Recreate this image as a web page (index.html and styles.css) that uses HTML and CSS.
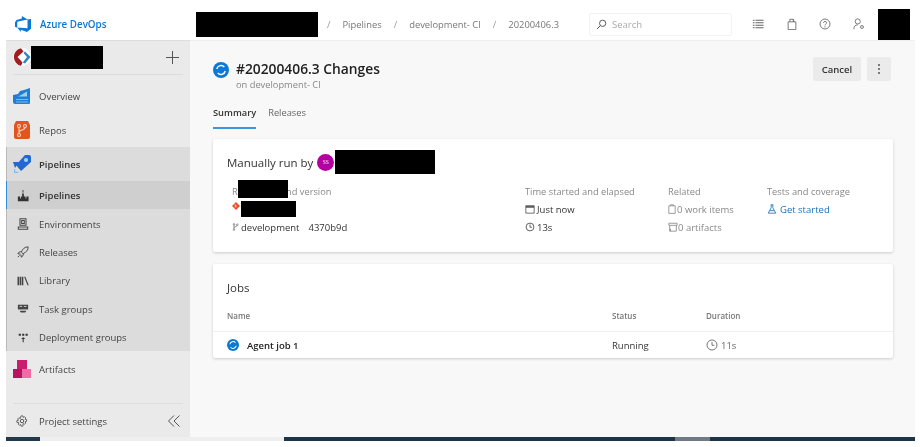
FILE: index.html
```html
<!DOCTYPE html>
<html lang="en">
<head>
<meta charset="utf-8">
<title>Azure DevOps</title>
<link rel="stylesheet" href="styles.css">
</head>
<body>
<div class="app">
  <header class="topbar">
    <div class="brand">
      <svg class="brand-icon" viewBox="0 0 18 18"><path d="M17 4v9.740l-4 3.280-6.200-2.260V17l-3.510-4.590 10.230.8V4.440zm-3.410.49L7.850 1v2.580L2.580 5.120 1 7.150v4.610l2.260 1V6.860z" fill="#0a78d4"/></svg>
      <span>Azure DevOps</span>
    </div>
    <div class="redact crumb-redact"></div>
    <nav class="crumbs">
      <span class="sep">/</span><span>Pipelines</span><span class="sep">/</span><span>development- CI</span><span class="sep">/</span><span>20200406.3</span>
    </nav>
    <div class="search">
      <svg class="ico" viewBox="0 0 14 14"><circle cx="8.500" cy="5.500" r="4" fill="none" stroke="#444" stroke-width="1.100"/><path d="M5.500 8.500 1.500 12.500" stroke="#444" stroke-width="1.200"/></svg>
      <span>Search</span>
    </div>
    <div class="top-icons">
      <svg class="ico" viewBox="0 0 14 14"><path d="M1 2.500h2M1 5.500h2M1 8.500h2M1 11.500h2M4 2.500h9.500M4 5.500h9.500M4 8.500h9.500M4 11.500h9.500" stroke="#666" stroke-width="1.200"/></svg>
      <svg class="ico" viewBox="0 0 14 14"><path d="M2.500 4.500h9v9h-9zM4.500 4.500V1.500h4l1 3M8.500 1.500v3" fill="none" stroke="#666"/></svg>
      <svg class="ico" viewBox="0 0 14 14"><circle cx="7" cy="7" r="5.800" fill="none" stroke="#666"/><path d="M5.200 5.600C5.200 3.400 8.900 3.500 8.900 5.600 8.900 7 7 7 7 8.600" fill="none" stroke="#666"/><circle cx="7" cy="10.300" r=".7" fill="#666"/></svg>
      <svg class="ico" viewBox="0 0 14 14"><circle cx="5.500" cy="4" r="3" fill="none" stroke="#666"/><path d="M1 13c0-3 1.500-5 4.500-5" fill="none" stroke="#666"/><circle cx="10.500" cy="10.500" r="1.700" fill="none" stroke="#666"/></svg>
    </div>
    <div class="redact avatar-redact"></div>
  </header>
  <div class="body">
    <aside class="sidebar">
      <div class="org">
        <svg class="org-logo" viewBox="0 0 18 18"><circle cx="9" cy="9" r="9" fill="#fff"/><path d="M8 0.200A9 9 0 0 0 8 17.800L9.500 14.500 4.500 9 10.500 3.500z" fill="#a31c22"/><path d="M12 3.500 17.500 9 12 15.500 9.800 14.500 14 9 10.500 5z" fill="#2a86c8"/></svg>
        <div class="redact org-redact"></div>
        <svg class="plus" viewBox="0 0 13 13"><path d="M6.500 0v13M0 6.500h13" stroke="#555" stroke-width="1"/></svg>
      </div>
      <div class="hub hub-overview">
        <svg class="hub-icon" viewBox="0 0 18 18"><path d="M0 8l5-1 2-3 4-1 6-2v15a1 1 0 0 1-1 1H2a2 2 0 0 1-2-2z" fill="#1f7fd4"/><path d="M5 9.500l4-2 5-3v5H5z" fill="#9ed0f2"/><path d="M3 12.500h12M3 15h12" stroke="#7dbcec" stroke-width="1"/></svg>
        <span>Overview</span>
      </div>
      <div class="hub hub-repos">
        <svg class="hub-icon" viewBox="0 0 18 18"><path d="M3 0h12l2 4v12a2 2 0 0 1-2 2H3a2 2 0 0 1-2-2V4z" fill="#e2561d"/><g fill="none" stroke="#fbd4c0" stroke-width="1.100"><circle cx="6" cy="14" r="1.500"/><circle cx="6" cy="5" r="1.500"/><circle cx="12" cy="5" r="1.500"/><path d="M6 6.500v6M12 6.500c0 3-6 2-6 5"/></g></svg>
        <span>Repos</span>
      </div>
      <div class="group">
        <div class="hub hub-pipelines">
          <svg class="hub-icon" viewBox="0 0 18 18"><path d="M18 2a2 2 0 0 0-2-2h-4L3 10l5 6 10-9z" fill="#2268d2"/><path d="M0 7h6L2 13z" fill="#2268d2"/><path d="M1 14v4h5l-1.500-1.200H2.200v-2.500z" fill="#7dbcec"/><circle cx="13" cy="5" r="2" fill="#a9d3f5"/></svg>
          <span>Pipelines</span>
        </div>
        <div class="sub active">
          <svg class="sub-icon" viewBox="0 0 14 14"><path d="M1 13V7.500h2.500V10h1V7.500H6V4h2v3.500h2V10h1V7.500h2.500V13z" fill="#333"/><path d="M7 0v3" stroke="#333"/></svg>
          <span>Pipelines</span>
        </div>
        <div class="sub">
          <svg class="sub-icon" viewBox="0 0 14 14"><path d="M3.500 1h7v7.500h-7zM5.500 3h3v3.500h-3zM1.500 13v-2.500h11V13z" fill="none" stroke="#444" stroke-width="1.200"/></svg>
          <span>Environments</span>
        </div>
        <div class="sub">
          <svg class="sub-icon" viewBox="0 0 14 14"><path d="M13 1c-4 0-6 2-8 6l2 2c4-2 6-4 6-8zM4.500 6.500 2 7.500 1 9l3 .5M7.500 9.500l-1 2.500-1.500 1-.5-3M3 11l-2 2" fill="none" stroke="#444" stroke-width="1.100"/></svg>
          <span>Releases</span>
        </div>
        <div class="sub">
          <svg class="sub-icon" viewBox="0 0 14 14"><path d="M1.500 2v10M4 2v10M6.500 2v10" stroke="#444" stroke-width="1.800"/><path d="M9 2l4 10" stroke="#444" stroke-width="1.300"/></svg>
          <span>Library</span>
        </div>
        <div class="sub">
          <svg class="sub-icon" viewBox="0 0 14 14"><path d="M1 2h12v5.500H1z" fill="#444"/><path d="M3 4h3M8 4h3" stroke="#ddd"/><path d="M3 9h8l-1.500 2h-5z" fill="#444"/></svg>
          <span>Task groups</span>
        </div>
        <div class="sub">
          <svg class="sub-icon" viewBox="0 0 14 14"><path d="M2 2h2.500v2.500H2zM6 2h2.500v2.500H6zM10 2h2.500v2.500H10z" fill="#333"/><path d="M7.200 6v6M5.500 7.500h3.500" stroke="#333" stroke-width="1.200"/></svg>
          <span>Deployment groups</span>
        </div>
      </div>
      <div class="hub hub-artifacts">
        <svg class="hub-icon" viewBox="0 0 18 18"><path d="M4 0h10v9H4z" fill="#c91d6e"/><path d="M0 9h9v9H0z" fill="#b5135f"/><path d="M9 9h9v9H9z" fill="#f06aa6"/></svg>
        <span>Artifacts</span>
      </div>
      <div class="side-foot">
        <svg class="sub-icon" viewBox="0 0 14 14"><circle cx="7" cy="7" r="2" fill="none" stroke="#444"/><path d="M6 1h2l.4 1.800 1.600-.8 1.400 1.400-.8 1.600 1.800.4v2l-1.800.4.800 1.600-1.400 1.400-1.600-.8L8 13H6l-.4-1.800-1.600.8-1.400-1.400.8-1.600L1 8.600v-2l1.800-.4L2 4.600l1.400-1.400 1.600.8z" fill="none" stroke="#444" stroke-width=".9"/></svg>
        <span>Project settings</span>
        <svg class="collapse" viewBox="0 0 12 12"><path d="M6 .5.500 6 6 11.500M11.500.500 6 6l5.500 5.500" fill="none" stroke="#555"/></svg>
      </div>
    </aside>
    <main class="main">
      <div class="page-head">
        <svg class="run-icon big" viewBox="0 0 16 16"><use href="#running"/></svg>
        <div class="titles">
          <h1>#20200406.3 Changes</h1>
          <p>on development- CI</p>
        </div>
        <div class="actions">
          <button class="btn">Cancel</button>
          <button class="btn more" aria-label="More"><i></i><i></i><i></i></button>
        </div>
      </div>
      <div class="tabs">
        <span class="tab current">Summary</span>
        <span class="tab">Releases</span>
      </div>
      <section class="card summary">
        <div class="run-by">
          <span>Manually run by</span>
          <span class="avatar">SS</span>
          <div class="redact runner-redact"></div>
        </div>
        <div class="meta">
          <div class="col col-repo">
            <div class="label">Repository and version</div>
            <div class="redact repo-redact"></div>
            <div class="redact version-redact"></div>
            <svg class="git" viewBox="0 0 10 10"><path d="M5 0 10 5 5 10 0 5z" fill="#e8502a"/><path d="M4 3v4M4 4l2 1.500" stroke="#fff" stroke-width=".8"/></svg>
            <div class="line branch">
              <svg class="ico-s" viewBox="0 0 12 12"><path d="M3 2v8M3 7c0-2 5-1 5-4" fill="none" stroke="#555"/><circle cx="3" cy="2" r="1.200" fill="#fff" stroke="#555" stroke-width=".8"/><circle cx="8" cy="2.500" r="1.200" fill="#fff" stroke="#555" stroke-width=".8"/><circle cx="3" cy="10" r="1.200" fill="#fff" stroke="#555" stroke-width=".8"/></svg>
              <span>development</span><span class="hash">4370b9d</span>
            </div>
          </div>
          <div class="col col-time">
            <div class="label">Time started and elapsed</div>
            <div class="line"><svg class="ico-s" viewBox="0 0 12 12"><path d="M1 2h10v9H1z" fill="none" stroke="#555"/><path d="M1 3.500h10" stroke="#555" stroke-width="2"/></svg><span>Just now</span></div>
            <div class="line"><svg class="ico-s" viewBox="0 0 12 12"><circle cx="6" cy="6" r="4.700" fill="none" stroke="#444"/><path d="M6 3v3.300h2.300" fill="none" stroke="#444"/></svg><span>13s</span></div>
          </div>
          <div class="col col-related">
            <div class="label">Related</div>
            <div class="line muted"><svg class="ico-xs" viewBox="0 0 10 12"><path d="M1 2h8v9.500H1zM3 2V.8h4V2" fill="none" stroke="#888"/></svg><span>0 work items</span></div>
            <div class="line muted"><svg class="ico-xs wide" viewBox="0 0 12 12"><path d="M1 1.500h10v2.500H1zM2 4v7h8V4M3 11V8" fill="none" stroke="#888"/></svg><span>0 artifacts</span></div>
          </div>
          <div class="col col-tests">
            <div class="label">Tests and coverage</div>
            <div class="line link"><svg class="ico-s" viewBox="0 0 12 12"><path d="M4.500 1h3M5 1v3.500L1.500 11h9L7 4.500V1M3.500 8h5" fill="none" stroke="#1e6fb5"/></svg><span>Get started</span></div>
          </div>
        </div>
      </section>
      <section class="card jobs">
        <h2>Jobs</h2>
        <div class="row head">
          <span class="c-name">Name</span><span class="c-status">Status</span><span class="c-dur">Duration</span>
        </div>
        <div class="row job">
          <span class="c-name agent"><svg class="run-icon" viewBox="0 0 16 16"><use href="#running"/></svg><b>Agent job 1</b></span>
          <span class="c-status">Running</span>
          <span class="c-dur dur"><svg class="ico-clock" viewBox="0 0 12 12"><circle cx="6" cy="6" r="5" fill="none" stroke="#666" stroke-width=".9"/><path d="M6 3v3.300h2.300" fill="none" stroke="#666" stroke-width=".9"/></svg>11s</span>
        </div>
      </section>
    </main>
  </div>
  <div class="strip"><div class="s-a"></div><div class="s-b"></div><div class="s-c"></div><div class="s-d"></div><div class="s-c grow"></div></div>
</div>
<svg class="defs" width="0" height="0"><defs><g id="running"><circle cx="8" cy="8" r="8" fill="#0a78d4"/><path d="M3.800 7a4.300 4.300 0 0 1 7.500-2M12.200 9a4.300 4.300 0 0 1-7.500 2" fill="none" stroke="#fff" stroke-width="1.400"/></g></defs></svg>
</body>
</html>
```
FILE: styles.css
```css
* { box-sizing: border-box; }
html, body { margin: 0; padding: 0; background: #fff; }
body { width: 920px; height: 447px; overflow: hidden; font-family: "Open Sans", "Noto Sans", sans-serif; font-size: 10px; color: #333; }
.app { display: flex; flex-direction: column; width: 920px; height: 447px; filter: blur(.35px); }
.defs { position: absolute; }
.redact { background: #000; flex: none; }
.topbar { display: flex; align-items: center; height: 40px; padding-top: 8px; flex: none; }
.brand { display: flex; align-items: center; width: 196px; padding-left: 14px; color: #0a78d4; font-weight: 600; font-size: 9.800px; gap: 8px; }
.brand-icon { width: 18px; height: 18px; }
.crumb-redact { width: 122px; height: 25px; }
.crumbs { display: flex; gap: 12px; width: 271px; padding-left: 9px; color: #777; font-size: 9.400px; }
.crumbs .sep { color: #999; }
.search { display: flex; align-items: center; gap: 5px; width: 143px; height: 23px; padding-left: 6px; border: 1px solid #f2f2f2; border-radius: 2px; color: #aaa; font-size: 9.500px; }
.ico { width: 11px; height: 11px; flex: none; }
.top-icons { display: flex; gap: 21.500px; margin-left: 20px; }
.top-icons .ico { width: 12px; height: 12px; }
.avatar-redact { width: 32px; height: 31px; align-self: flex-start; margin: 1px 0 0 13px; }
.body { display: flex; flex: none; height: 397px; padding-left: 6px; }
.sidebar { display: flex; flex-direction: column; width: 184px; background: #eaeaea; box-shadow: inset 0 1px 0 #ddd; }
.org { display: flex; align-items: center; height: 35px; margin: 0 7px; border-bottom: 1px solid #dcdcdc; flex: none; }
.org-logo { width: 18px; height: 18px; flex: none; }
.org-redact { width: 72px; height: 23px; }
.plus { width: 13px; height: 13px; margin-left: auto; margin-right: 4px; }
.hub { display: flex; align-items: center; gap: 8px; padding-left: 7px; height: 34px; flex: none; font-size: 9.500px; color: #444; }
.hub-icon { width: 18px; height: 18px; flex: none; }
.hub-overview { margin-top: 4px; }
.group { background: #dcdcdc; border-left: 1px solid #b8b8b8; flex: none; }
.hub-pipelines { padding-left: 6px; font-weight: 600; color: #333; }
.sub { display: flex; align-items: center; gap: 10px; height: 28.400px; padding: 1px 0 0 10px; color: #444; font-size: 9.500px; }
.sub-icon { width: 12px; height: 12px; flex: none; }
.sub.active { background: #cfcfcf; box-shadow: -1px 0 0 #2f8fdc; font-weight: 600; color: #333; }
.hub-artifacts { height: 36px; }
.side-foot { display: flex; align-items: center; gap: 11px; height: 34px; margin: auto 7px 0; padding: 1px 0 0 3px; border-top: 1px solid #dedede; font-size: 9.500px; color: #444; flex: none; }
.collapse { width: 12px; height: 12px; margin-left: auto; margin-right: 3px; }
.main { width: 725px; background: #f8f8f8; padding: 19px 23px 0; box-shadow: inset 0 1px 0 #eee; }
.page-head { display: flex; align-items: flex-start; height: 36px; }
.run-icon { width: 12px; height: 12px; flex: none; }
.run-icon.big { width: 16px; height: 16px; margin: 3px 7px 0 0; }
.titles h1 { margin: 0; font-size: 13.800px; line-height: 20px; font-weight: 600; color: #222; }
.titles p { margin: 0; font-size: 9.300px; line-height: 12px; color: #888; }
.actions { display: flex; gap: 6px; margin: -2px 1px 0 auto; }
.btn { height: 24px; border: 0; border-radius: 2px; background: #ebebeb; font: 600 9.500px "Open Sans", sans-serif; color: #333; width: 48px; padding: 0; }
.btn.more { width: 24px; display: flex; flex-direction: column; align-items: center; justify-content: center; gap: 2px; }
.btn.more i { width: 2px; height: 2px; background: #555; border-radius: 50%; }
.tabs { display: flex; gap: 12px; height: 29px; margin-top: 5px; }
.tab { display: flex; align-items: center; height: 29px; padding-bottom: 3px; font-size: 9.300px; color: #666; border-bottom: 2px solid transparent; }
.tab.current { color: #333; font-weight: 600; border-bottom-color: #3a96dd; }
.card { background: #fff; border-radius: 2px; box-shadow: 0 1px 3px rgba(0,0,0,.18); width: 680px; }
.summary { height: 113px; margin-top: 10px; padding: 11px 14px; }
.run-by { display: flex; align-items: center; font-size: 11.500px; color: #333; height: 24px; }
.avatar { display: flex; align-items: center; justify-content: center; width: 17px; height: 17px; margin-left: 4px; border-radius: 50%; background: #b4009e; color: #fff; font: 5.500px "Liberation Serif", serif; }
.runner-redact { width: 100px; height: 24px; margin-left: 1px; }
.meta { display: flex; margin-top: 10px; }
.col { font-size: 9.500px; color: #333; }
.col-repo { width: 293px; position: relative; margin-left: 5px; white-space: nowrap; }
.col-time { width: 143px; }
.col-related { width: 99px; }
.label { color: #888; height: 16px; line-height: 16px; font-size: 9.300px; }
.line { display: flex; align-items: center; gap: 1px; height: 18px; }
.repo-redact { position: absolute; left: 6px; top: -4px; width: 50px; height: 18px; }
.version-redact { position: absolute; left: 9px; top: 17px; width: 55px; height: 16px; }
.git { position: absolute; left: 0; top: 18px; width: 8px; height: 8px; }
.branch { position: absolute; left: 0; top: 34px; }
.branch .ico-s { width: 8px; margin: 0; }
.hash { margin-left: 8px; }
.ico-s { width: 10px; height: 10px; flex: none; margin-right: 1px; }
.ico-xs { width: 8px; height: 10px; flex: none; }
.ico-xs.wide { width: 10px; margin-right: -1px; }
.muted { color: #888; }
.link { color: #1e6fb5; gap: 2px; }
.jobs { height: 94px; margin-top: 12px; }
.jobs h2 { margin: 0; padding: 15px 14px 0; font-size: 11.500px; line-height: 18px; font-weight: 400; color: #333; }
.row { display: flex; align-items: center; padding: 0 14px; }
.row.head { height: 35px; font-size: 8px; color: #777; font-weight: 600; padding-top: 3px; border-bottom: 1px solid #f0f0f0; }
.row.job { height: 26px; font-size: 9.500px; color: #333; }
.c-name { width: 385px; }
.c-status { width: 94px; }
.agent { display: flex; align-items: center; gap: 8px; }
.agent b { font-weight: 600; color: #222; }
.dur { display: flex; align-items: center; gap: 3px; color: #666; }
.ico-clock { width: 12px; height: 12px; }
.strip { display: flex; height: 4px; flex: none; padding-left: 6px; }
.s-a { width: 34px; background: #22384c; }
.s-b { width: 244px; background: #efefef; }
.s-c { width: 391px; background: #1d3346; }
.s-d { width: 35px; background: #6f7a84; }
.grow { width: 205px; }
```
